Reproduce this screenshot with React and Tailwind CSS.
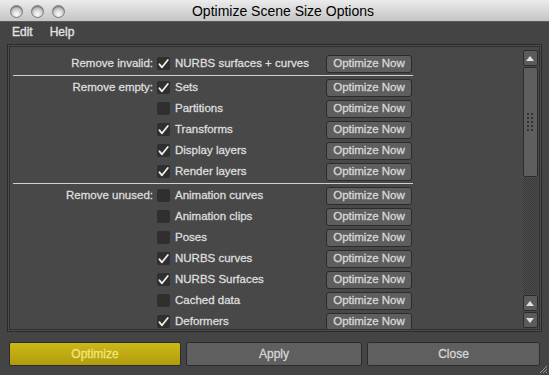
import React from 'react';

const font = { fontFamily: '"Liberation Sans", Arial, sans-serif' };

const groups = [
  {
    label: 'Remove invalid:',
    items: [{ name: 'NURBS surfaces + curves', on: true }],
  },
  {
    label: 'Remove empty:',
    items: [
      { name: 'Sets', on: true },
      { name: 'Partitions', on: false },
      { name: 'Transforms', on: true },
      { name: 'Display layers', on: true },
      { name: 'Render layers', on: true },
    ],
  },
  {
    label: 'Remove unused:',
    items: [
      { name: 'Animation curves', on: false },
      { name: 'Animation clips', on: false },
      { name: 'Poses', on: false },
      { name: 'NURBS curves', on: true },
      { name: 'NURBS Surfaces', on: true },
      { name: 'Cached data', on: false },
      { name: 'Deformers', on: true },
    ],
  },
];

// light window control
const Light = () => (
  <div className="w-[13px] h-[13px] rounded-full border border-[#7a7a7a] bg-[radial-gradient(circle_at_50%_75%,#ffffff_0%,#d2d2d2_45%,#8e8e8e_100%)] shadow-[inset_0_1px_1px_rgba(0,0,0,0.3)]" />
);

const Check = ({ on }) => (
  <div className="w-[13px] h-[13px] rounded-[2px] bg-[#2f2f2f] flex items-center justify-center shrink-0">
    {on && (
      <svg width="11" height="10" viewBox="0 0 11 10">
        <path d="M1.5 5.3 L4 8.3 L9.8 1" fill="none" stroke="#efefef" strokeWidth="1.8" strokeLinecap="round" strokeLinejoin="round" />
      </svg>
    )}
  </div>
);

const Row = ({ label, item }) => (
  <div className="flex items-center h-[21px]">
    <div className="w-[147px] text-right text-[11.5px] text-[#dedede] pr-[4px] [-webkit-text-stroke:0.3px]">{label}</div>
    <Check on={item.on} />
    <div className="w-[156px] pl-[5px] text-[11.5px] text-[#dedede] whitespace-nowrap [-webkit-text-stroke:0.3px]">{item.name}</div>
    <button className="w-[86px] h-[18px] rounded-[3px] border border-[#2b2b2b] bg-[#5e5e5e] text-[11.5px] text-[#d8d8d8] leading-none [-webkit-text-stroke:0.3px]">
      Optimize Now
    </button>
  </div>
);

const ArrowBtn = ({ up }) => (
  <div className="w-[15px] h-[16px] rounded-[2px] border border-[#2c2c2c] bg-[#5b5b5b] flex items-center justify-center">
    <svg width="8" height="5" viewBox="0 0 8 5">
      {up ? <path d="M0 5 L4 0 L8 5 Z" fill="#e0e0e0" /> : <path d="M0 0 L4 5 L8 0 Z" fill="#e0e0e0" />}
    </svg>
  </div>
);

const Scrollbar = () => (
  <div className="w-[18px] flex flex-col items-center pt-[3px] pb-[1px] gap-[1px]">
    <ArrowBtn up />
    <div className="w-[15px] h-[110px] rounded-[2px] border border-[#2c2c2c] bg-[#5e5e5e] flex items-center justify-center">
      <div className="grid grid-cols-2 gap-x-[2px] gap-y-[2px]">
        {Array.from({ length: 10 }).map((_, i) => (
          <div key={i} className="w-[2px] h-[2px] bg-[#333]" />
        ))}
      </div>
    </div>
    <div className="w-[15px] flex-1 bg-[repeating-conic-gradient(#3a3a3a_0%_25%,#4c4c4c_0%_50%)] bg-[length:2px_2px]" />
    <ArrowBtn up />
    <ArrowBtn />
  </div>
);

export default function App() {
  return (
    <div className="w-[549px] h-[375px] bg-[#444444] flex flex-col overflow-hidden relative" style={font}>
      {/* title bar */}
      <div className="h-[22px] bg-[linear-gradient(#ececec,#c4c4c4)] border-b border-[#5a5a5a] flex items-center relative">
        <div className="flex gap-[8px] pl-[10px] pt-[2px] relative z-10">
          <Light />
          <Light />
          <Light />
        </div>
        <div className="absolute inset-0 pl-[17px] pt-[1px] flex items-center justify-center text-[14px] text-black">
          Optimize Scene Size Options
        </div>
      </div>

      {/* menu */}
      <div className="h-[20px] flex items-center gap-[17px] pl-[12px] text-[12px] text-[#e2e2e2] [-webkit-text-stroke:0.35px]">
        <span>Edit</span>
        <span>Help</span>
      </div>

      {/* scroll frame */}
      <div className="mx-[7px] mt-[2px] h-[288px] border border-[#2a2a2a] p-[1px] bg-[#4c4c4c]">
        <div className="h-full border border-[#2f2f2f] bg-[#484848] flex overflow-hidden">
          <div className="flex-1 pt-[6px]">
            {groups.map((g, gi) => (
              <div key={gi}>
                {gi > 0 && (
                  <div className="h-[3px] flex items-center pl-[3px]">
                    <div className="w-[400px] h-[1px] bg-[#cfcfcf]" />
                  </div>
                )}
                {g.items.map((item, i) => (
                  <Row key={i} label={i === 0 ? g.label : ''} item={item} />
                ))}
              </div>
            ))}
          </div>
          <Scrollbar />
        </div>
      </div>

      {/* bottom buttons */}
      <div className="flex gap-[5px] px-[9px] mt-[10px]">
        <button className="w-[172px] h-[24px] rounded-[2px] border border-[#2c2c2c] bg-[linear-gradient(#cdb817,#b09c0c)] text-[12px] text-[#f0e57a] [-webkit-text-stroke:0.3px]">
          Optimize
        </button>
        <button className="w-[176px] h-[24px] rounded-[2px] border border-[#2c2c2c] bg-[#5f5f5f] text-[12px] text-[#d6d6d6] [-webkit-text-stroke:0.3px]">
          Apply
        </button>
        <button className="flex-1 h-[24px] rounded-[2px] border border-[#2c2c2c] bg-[#5f5f5f] text-[12px] text-[#d6d6d6] [-webkit-text-stroke:0.3px]">
          Close
        </button>
      </div>

      {/* resize grip */}
      <svg className="absolute right-[1px] bottom-[1px]" width="10" height="10" viewBox="0 0 10 10">
        <path d="M2 9 L9 2 M5 9 L9 5 M8 9 L9 8" stroke="#9a9a9a" strokeWidth="1" />
      </svg>
    </div>
  );
}
